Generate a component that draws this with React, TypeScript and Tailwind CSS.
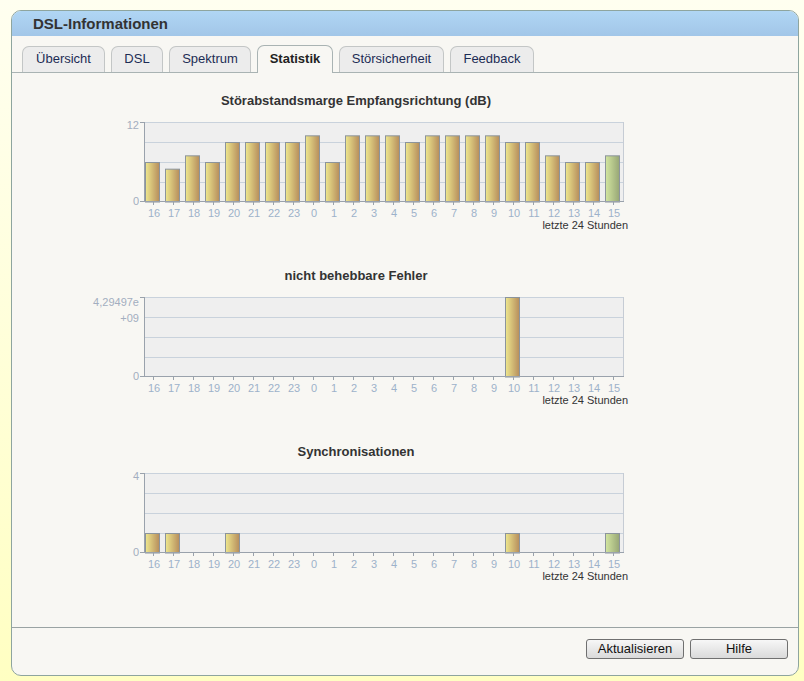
import React from "react";

const hours = [16, 17, 18, 19, 20, 21, 22, 23, 0, 1, 2, 3, 4, 5, 6, 7, 8, 9, 10, 11, 12, 13, 14, 15];

type ChartProps = {
  id: string;
  title: string;
  max: number;
  topLabel: React.ReactNode;
  values: number[];
  extra?: string;
};

function Chart({ id, title, max, topLabel, values, extra }: ChartProps) {
  return (
    <div className={`flex flex-col w-[544px] ml-[72px] ${extra ?? ""}`}>
      <div className="h-[16px] leading-[16px] text-[13px] font-bold text-[#333] text-center">{title}</div>
      <div className="flex mt-[13px]">
        <div className="w-[60px] h-[80px] relative text-[11px] leading-[13px] text-[#a3aec0] text-right">
          <div className="absolute right-[5px] top-[-3px]">{topLabel}</div>
          <div className="absolute right-[5px] bottom-[-6px]">0</div>
        </div>
        <svg width="480" height="80" className="overflow-visible block">
          <defs>
            <linearGradient id={`y${id}`} x1="0" x2="1" y1="0" y2="0">
              <stop offset="0" stopColor="#eee78e" />
              <stop offset="1" stopColor="#b68d5c" />
            </linearGradient>
            <linearGradient id={`g${id}`} x1="0" x2="1" y1="0" y2="0">
              <stop offset="0" stopColor="#d3e6a0" />
              <stop offset="1" stopColor="#97a676" />
            </linearGradient>
          </defs>
          <rect x="0" y="0" width="480" height="80" fill="#efefef" />
          {[0, 20, 40, 60].map((y) => (
            <line key={y} x1="0" x2="480" y1={y + 0.5} y2={y + 0.5} stroke="#c9d2dc" strokeWidth="1" />
          ))}
          <line x1="479.5" x2="479.5" y1="0" y2="80" stroke="#c6ccd4" />
          {values.map((v, i) => {
            if (v <= 0) return null;
            const h = (v / max) * 80;
            const green = i === 23;
            return (
              <rect
                key={i}
                x={i * 20 + 1.5}
                y={80 - h + 0.5}
                width={14}
                height={h - 0.5}
                fill={`url(#${green ? "g" : "y"}${id})`}
                stroke="#8b949c"
                strokeWidth="1"
              />
            );
          })}
          <line x1="0.5" x2="0.5" y1="0" y2="80" stroke="#9aa2ac" />
          <line x1="0" x2="480" y1="79.5" y2="79.5" stroke="#9aa2ac" />
          <line x1="-4" x2="0" y1="0.5" y2="0.5" stroke="#9aa2ac" />
          <line x1="-4" x2="0" y1="79.5" y2="79.5" stroke="#9aa2ac" />
          {hours.map((_, i) => (
            <line key={i} x1={i * 20 + 9.5} x2={i * 20 + 9.5} y1="80" y2="83" stroke="#9aa2ac" />
          ))}
        </svg>
      </div>
      <div className="flex ml-[60px] pt-[4px]">
        {hours.map((h) => (
          <div key={h} className="w-[20px] text-center text-[11px] leading-[14px] text-[#9db2ca]">
            {h}
          </div>
        ))}
      </div>
      <div className="text-right text-[11px] leading-[14px] text-[#333] -mt-[2px]">letzte 24 Stunden</div>
    </div>
  );
}

const tabs = [
  { label: "Übersicht", w: "w-[83px]" },
  { label: "DSL", w: "w-[52px]" },
  { label: "Spektrum", w: "w-[82px]" },
  { label: "Statistik", w: "w-[76px]", active: true },
  { label: "Störsicherheit", w: "w-[105px]" },
  { label: "Feedback", w: "w-[84px]" },
];

export default function App() {
  const snr = [6, 5, 7, 6, 9, 9, 9, 9, 10, 6, 10, 10, 10, 9, 10, 10, 10, 10, 9, 9, 7, 6, 6, 7];
  const fec = hours.map((h) => (h === 10 ? 1 : 0));
  const sync = hours.map((h) => (h === 16 || h === 17 || h === 20 || h === 10 || h === 15 ? 1 : 0));
  return (
    <div
      className="w-[804px] h-[681px] overflow-hidden bg-linear-to-b from-[#fffff0] to-[#ffffc2] pt-[10px] pl-[11px]"
      style={{ fontFamily: '"Liberation Sans", Arial, sans-serif' }}
    >
      <div className="w-[788px] h-[666px] border border-[#8ea59f] rounded-[10px] overflow-hidden bg-[#f8f7f3] flex flex-col">
        <div className="h-[25px] shrink-0 bg-linear-to-b from-[#b0d6f4] to-[#a2c6e8] flex items-center pl-[21px]">
          <span className="text-[15px] font-bold text-[#333] leading-[18px]">DSL-Informationen</span>
        </div>
        <div className="flex items-end gap-[6px] pl-[10px] pt-[9px] border-b border-[#a9b3b3] shrink-0">
          {tabs.map((t) =>
            t.active ? (
              <div
                key={t.label}
                className={`${t.w} h-[28px] -mb-px bg-[#f8f7f3] border border-b-0 border-[#a9b3b3] rounded-t-[7px] flex items-center justify-center pb-[2px] text-[13px] font-bold text-[#222]`}
              >
                {t.label}
              </div>
            ) : (
              <div
                key={t.label}
                className={`${t.w} h-[26px] bg-[#ececec] border border-b-0 border-[#c3c6c6] rounded-t-[7px] flex items-center justify-center pb-[1px] text-[13px] text-[#1c2c55]`}
              >
                {t.label}
              </div>
            )
          )}
        </div>
        <div className="flex-1 flex flex-col pt-[20px] gap-[36px]">
          <Chart id="a" title="Störabstandsmarge Empfangsrichtung (dB)" max={12} topLabel="12" values={snr} />
          <Chart
            id="b"
            title="nicht behebbare Fehler"
            max={1}
            topLabel={
              <div className="leading-[16px]">
                4,29497e
                <br />
                +09
              </div>
            }
            values={fec}
          />
          <Chart id="c" title="Synchronisationen" max={4} topLabel="4" values={sync} extra="mt-[1px]" />
        </div>
        <div className="h-[48px] shrink-0 border-t border-[#9aa3a3] flex justify-end items-start pt-[11px] pr-[10px] gap-[6px]">
          <button className="w-[98px] h-[20px] border border-[#707070] rounded-[3px] bg-linear-to-b from-[#f7f7f7] to-[#dadada] text-[13px] leading-[18px] text-[#111]">
            Aktualisieren
          </button>
          <button className="w-[98px] h-[20px] border border-[#707070] rounded-[3px] bg-linear-to-b from-[#f7f7f7] to-[#dadada] text-[13px] leading-[18px] text-[#111]">
            Hilfe
          </button>
        </div>
      </div>
    </div>
  );
}
